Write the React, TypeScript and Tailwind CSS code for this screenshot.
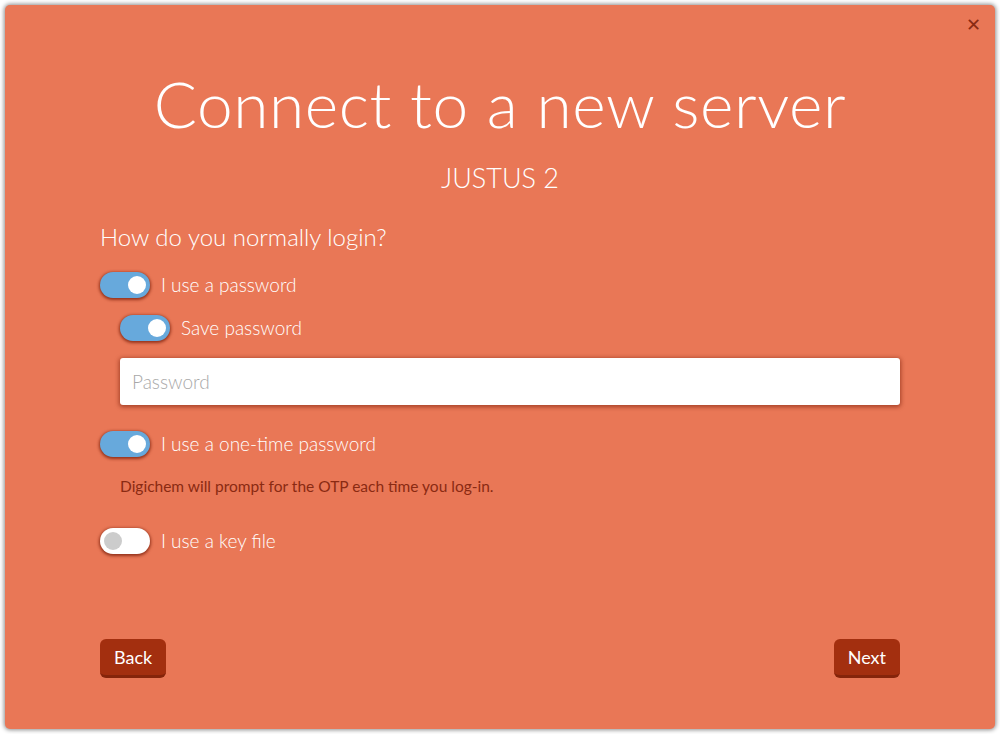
import { useState } from "react";

function Toggle({ on, onChange }: { on: boolean; onChange: () => void }) {
  return (
    <button
      type="button"
      onClick={onChange}
      className={`relative h-[26px] w-[50px] shrink-0 rounded-full shadow-[0_1px_3px_1px_rgba(120,30,10,0.75)] ${
        on ? "bg-[#67a9dc]" : "bg-white"
      }`}
    >
      <span
        className={`absolute top-[4px] h-[18px] w-[18px] rounded-full ${
          on ? "left-[28px] bg-white" : "left-[4px] bg-[#cccccc]"
        }`}
      />
    </button>
  );
}

export default function App() {
  const [usePassword, setUsePassword] = useState(true);
  const [savePassword, setSavePassword] = useState(true);
  const [useOtp, setUseOtp] = useState(true);
  const [useKey, setUseKey] = useState(false);

  return (
    <div
      className="h-[734px] w-full bg-white p-[5px]"
      style={{ fontFamily: "Lato, 'Open Sans', sans-serif" }}
    >
      <div className="relative h-full rounded-[5px] bg-[#e97756] shadow-[0_0_4px_1px_rgba(0,0,0,0.45)]">
        <button
          type="button"
          className="absolute right-[14px] top-[10px] text-[18px] leading-none text-[#8a2a12]"
        >
          ✕
        </button>

        <div className="mx-auto flex w-[800px] flex-col pt-[63px]">
          <h1 className="text-center text-[64px] font-light leading-[72px] tracking-[0.6px] text-white">
            Connect to a new server
          </h1>
          <p className="mt-[22px] text-center text-[27px] font-light leading-[32px] text-white">
            JUSTUS 2
          </p>

          <h2 className="mt-[27px] text-[24px] font-light leading-[32px] text-white">
            How do you normally login?
          </h2>

          <div className="mt-[19px] flex h-[26px] items-center gap-[11px]">
            <Toggle on={usePassword} onChange={() => setUsePassword(!usePassword)} />
            <span className="text-[19px] font-light leading-[26px] text-white">I use a password</span>
          </div>

          <div className="ml-[20px] mt-[17px] flex h-[26px] items-center gap-[11px]">
            <Toggle on={savePassword} onChange={() => setSavePassword(!savePassword)} />
            <span className="text-[19px] font-light leading-[26px] text-white">Save password</span>
          </div>

          <input
            type="password"
            placeholder="Password"
            className="ml-[20px] mt-[17px] h-[47px] w-[780px] rounded-[3px] bg-white px-[12px] text-[19px] font-light text-gray-700 shadow-[0_1px_4px_1px_rgba(120,30,10,0.6)] outline-none placeholder:text-[#a8a8a8]"
          />

          <div className="mt-[26px] flex h-[26px] items-center gap-[11px]">
            <Toggle on={useOtp} onChange={() => setUseOtp(!useOtp)} />
            <span className="text-[19px] font-light leading-[26px] text-white">I use a one-time password</span>
          </div>
          <p className="ml-[20px] mt-[19px] text-[15.5px] leading-[20px] text-[#8a2a12]">
            Digichem will prompt for the OTP each time you log-in.
          </p>

          <div className="mt-[32px] flex h-[26px] items-center gap-[11px]">
            <Toggle on={useKey} onChange={() => setUseKey(!useKey)} />
            <span className="text-[19px] font-light leading-[26px] text-white">I use a key file</span>
          </div>

          <div className="mt-[85px] flex justify-between">
            <button
              type="button"
              className="h-[39px] rounded-[6px] border-b-[3px] border-[#85240a] bg-[#a32f0f] px-[14px] text-[18px] text-white"
            >
              Back
            </button>
            <button
              type="button"
              className="h-[39px] rounded-[6px] border-b-[3px] border-[#85240a] bg-[#a32f0f] px-[14px] text-[18px] text-white"
            >
              Next
            </button>
          </div>
        </div>
      </div>
    </div>
  );
}
